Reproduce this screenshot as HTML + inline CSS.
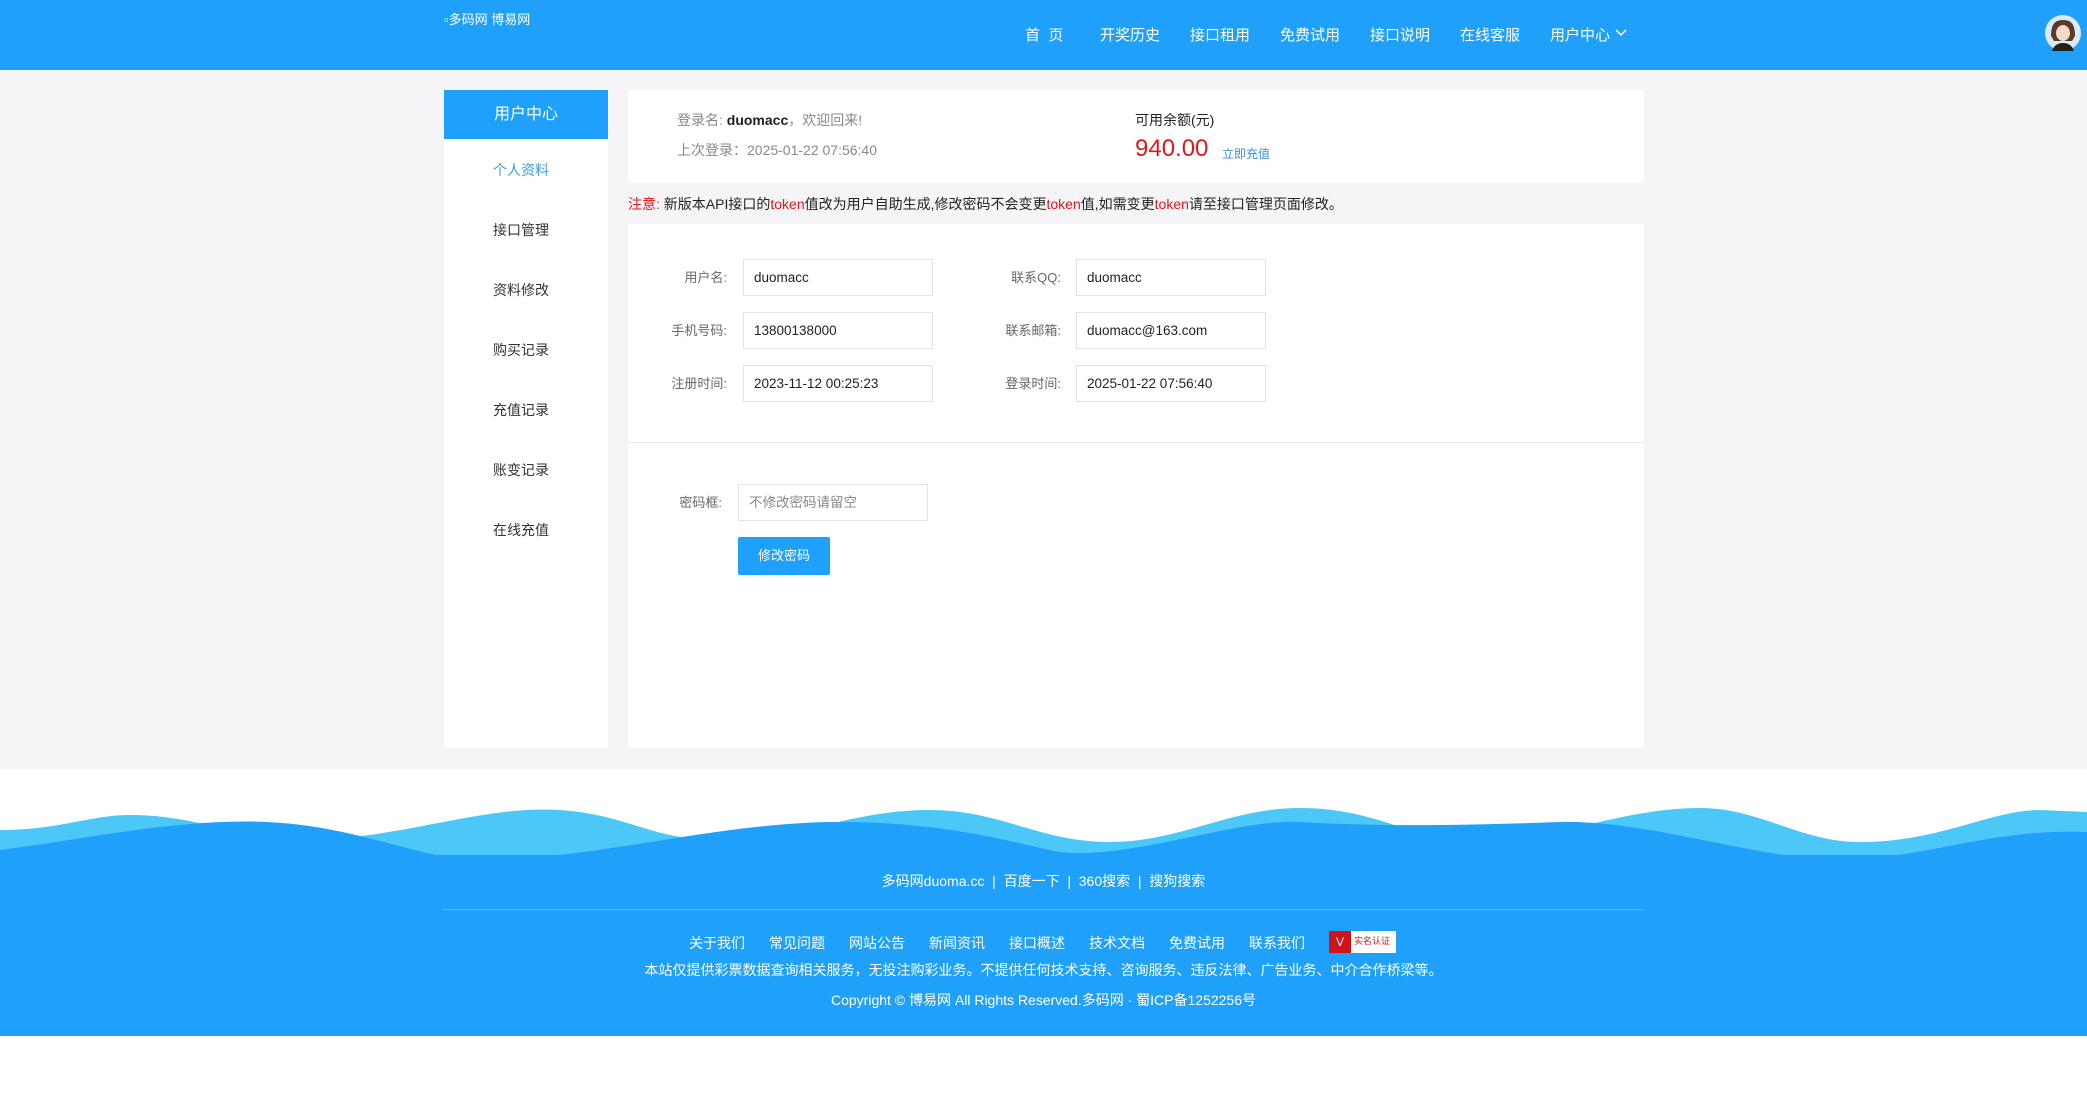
<!DOCTYPE html>
<html><head><meta charset="utf-8"><style>
*{margin:0;padding:0;box-sizing:border-box}
body{width:2087px;height:1120px;position:relative;background:#fff;font-family:"Liberation Sans","Noto Sans CJK SC",sans-serif;color:#333;overflow:hidden}
.a{position:absolute;white-space:nowrap}
.hdr{left:0;top:0;width:2087px;height:70px;background:#1fa0fa}
.nav{top:24px;font-size:15px;color:#fff}
.bg{left:0;top:70px;width:2087px;height:699px;background:#f5f5f7}
.side{left:444px;top:90px;width:164px;height:658px;background:#fff}
.sh{left:444px;top:90px;width:164px;height:49px;background:#1fa0fa;color:#fff;font-size:16px;text-align:center;line-height:49px}
.si{left:493px;font-size:14px;color:#333;line-height:20px}
.card{left:628px;top:90px;width:1016px;height:93px;background:#fff}
.panel{left:628px;top:224px;width:1016px;height:524px;background:#fff}
.lab{font-size:13px;color:#666;text-align:right;width:100px;line-height:20px}
.inp{width:190px;height:37px;border:1px solid #e2e2e2;background:#fff;font-size:13.5px;color:#222;padding-left:10px;line-height:35px}
.ft{font-size:14px;color:#fff}
.fl{top:933px;font-size:14px;color:#fff}
</style></head><body>
<div class="a hdr"></div>
<div class="a" style="left:444px;top:9px;font-size:13px;color:#fff">▫多码网 博易网</div>
<div class="a nav" style="left:1025px">首&nbsp;&nbsp;页</div>
<div class="a nav" style="left:1100px">开奖历史</div>
<div class="a nav" style="left:1190px">接口租用</div>
<div class="a nav" style="left:1280px">免费试用</div>
<div class="a nav" style="left:1370px">接口说明</div>
<div class="a nav" style="left:1460px">在线客服</div>
<div class="a nav" style="left:1550px">用户中心</div>
<svg class="a" style="left:1614px;top:28px" width="14" height="10"><path d="M2 2l5 5 5-5" stroke="#fff" stroke-width="1.5" fill="none"/></svg>
<svg class="a" style="left:2044px;top:14px" width="38" height="38"><circle cx="19" cy="19" r="18" fill="#dce9f5"/><path d="M7 22c0-12 4-16 12-16s12 4 12 16l-3 5H10z" fill="#5a3a2a"/><ellipse cx="19" cy="19" rx="7" ry="8" fill="#f6d9c8"/><path d="M8 37c2-6 6-8 11-8s9 2 11 8z" fill="#222"/></svg>
<div class="a bg"></div>
<div class="a side"></div>
<div class="a sh">用户中心</div>
<div class="a si" style="top:160px;color:#3b9be0">个人资料</div>
<div class="a si" style="top:220px">接口管理</div>
<div class="a si" style="top:280px">资料修改</div>
<div class="a si" style="top:340px">购买记录</div>
<div class="a si" style="top:400px">充值记录</div>
<div class="a si" style="top:460px">账变记录</div>
<div class="a si" style="top:520px">在线充值</div>
<div class="a card"></div>
<div class="a" style="left:677px;top:110px;font-size:14px;color:#888">登录名: <b style="color:#222">duomacc</b>，欢迎回来!</div>
<div class="a" style="left:677px;top:140px;font-size:14px;color:#888">上次登录：2025-01-22 07:56:40</div>
<div class="a" style="left:1135px;top:110px;font-size:14px;color:#222">可用余额(元)</div>
<div class="a" style="left:1135px;top:135px;font-size:24px;color:#e0161d">940.00</div>
<div class="a" style="left:1222px;top:145px;font-size:12px;color:#3b8fd8">立即充值</div>
<div class="a" style="left:628px;top:194px;font-size:14px;color:#222"><span style="color:#e0161d">注意:</span> 新版本API接口的<span style="color:#e0161d">token</span>值改为用户自助生成,修改密码不会变更<span style="color:#e0161d">token</span>值,如需变更<span style="color:#e0161d">token</span>请至接口管理页面修改。</div>
<div class="a panel"></div>
<div class="a" style="left:628px;top:442px;width:1016px;height:1px;background:#e6e6e6"></div>
<div class="a lab" style="left:627px;top:268px">用户名:</div><div class="a inp" style="left:743px;top:259px">duomacc</div>
<div class="a lab" style="left:627px;top:321px">手机号码:</div><div class="a inp" style="left:743px;top:312px">13800138000</div>
<div class="a lab" style="left:627px;top:374px">注册时间:</div><div class="a inp" style="left:743px;top:365px">2023-11-12 00:25:23</div>
<div class="a lab" style="left:961px;top:268px">联系QQ:</div><div class="a inp" style="left:1076px;top:259px">duomacc</div>
<div class="a lab" style="left:961px;top:321px">联系邮箱:</div><div class="a inp" style="left:1076px;top:312px">duomacc@163.com</div>
<div class="a lab" style="left:961px;top:374px">登录时间:</div><div class="a inp" style="left:1076px;top:365px">2025-01-22 07:56:40</div>
<div class="a lab" style="left:622px;top:493px">密码框:</div><div class="a inp" style="left:738px;top:484px;color:#888">不修改密码请留空</div>
<div class="a" style="left:738px;top:537px;width:92px;height:38px;background:#1fa0fa;color:#fff;font-size:13px;text-align:center;line-height:38px;border-radius:2px">修改密码</div>
<svg class="a" style="left:0;top:800px" width="2087" height="236" viewBox="0 0 2087 236">
<path d="M0 30 C60 30 90 15 130 15 C200 15 240 40 300 40 C400 40 480 5 560 10 C630 15 650 40 720 40 C800 40 850 10 930 10 C1000 10 1040 42 1110 42 C1180 42 1230 8 1300 8 C1380 8 1420 44 1480 44 C1540 44 1620 8 1700 8 C1760 8 1800 42 1860 42 C1940 42 1990 10 2040 10 L2087 12 V236 H0Z" fill="#4cc8f8"/>
<path d="M0 50 C80 40 180 18 266 22 C360 26 420 60 480 60 C600 60 720 20 852 22 C960 24 1020 45 1060 52 C1130 60 1240 18 1300 22 C1400 28 1500 24 1560 22 C1650 20 1760 60 1840 60 C1920 60 1990 28 2087 32 V236 H0Z" fill="#1fa0fa"/>
</svg>
<div class="a" style="left:0;top:855px;width:2087px;height:180px;background:#1fa0fa"></div>
<div class="a ft" style="left:0;top:871px;width:2087px;text-align:center">多码网duoma.cc &nbsp;|&nbsp; 百度一下 &nbsp;|&nbsp; 360搜索 &nbsp;|&nbsp; 搜狗搜索</div>
<div class="a" style="left:443px;top:909px;width:1201px;height:1px;background:#4cc0f8"></div>
<div class="a fl" style="left:689px">关于我们</div>
<div class="a fl" style="left:769px">常见问题</div>
<div class="a fl" style="left:849px">网站公告</div>
<div class="a fl" style="left:929px">新闻资讯</div>
<div class="a fl" style="left:1009px">接口概述</div>
<div class="a fl" style="left:1089px">技术文档</div>
<div class="a fl" style="left:1169px">免费试用</div>
<div class="a fl" style="left:1249px">联系我们</div>
<div class="a" style="left:1329px;top:931px;width:67px;height:22px;background:#fff"><div style="width:22px;height:22px;background:#d0121b;color:#fff;font-size:12px;text-align:center;line-height:22px">V</div><div class="a" style="left:25px;top:3px;font-size:9px;color:#d0121b">实名认证</div></div>
<div class="a ft" style="left:0;top:960px;width:2087px;text-align:center">本站仅提供彩票数据查询相关服务，无投注购彩业务。不提供任何技术支持、咨询服务、违反法律、广告业务、中介合作桥梁等。</div>
<div class="a ft" style="left:0;top:990px;width:2087px;text-align:center">Copyright © 博易网 All Rights Reserved.多码网 · 蜀ICP备1252256号</div>
</body></html>
